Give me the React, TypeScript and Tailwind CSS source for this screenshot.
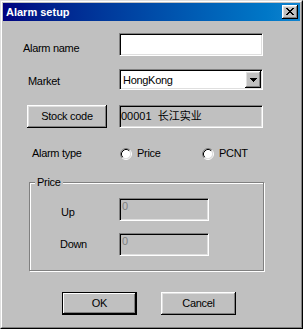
import React from "react";

const font = { fontFamily: '"Liberation Sans", Arial, "Noto Sans CJK SC", sans-serif' };

const sunken =
  "border border-t-[#808080] border-l-[#808080] border-b-white border-r-white shadow-[inset_1px_1px_0_#000,inset_-1px_-1px_0_#dfdfdf]";
const raised =
  "shadow-[inset_-1px_-1px_0_#000,inset_1px_1px_0_#fff,inset_-2px_-2px_0_#808080,inset_2px_2px_0_#dfdfdf]";

function Radio({ label }: { label: string }) {
  return (
    <div className="flex items-center">
      <svg width="12" height="12" viewBox="0 0 12 12">
        <circle cx="6" cy="6" r="4.5" fill="#fff" />
        <path d="M2.11 9.89 A5.5 5.5 0 0 1 9.89 2.11" stroke="#808080" strokeWidth="1" fill="none" />
        <path d="M9.89 2.11 A5.5 5.5 0 0 1 2.11 9.89" stroke="#fff" strokeWidth="1" fill="none" />
        <path d="M2.82 9.18 A4.5 4.5 0 0 1 9.18 2.82" stroke="#000" strokeWidth="1" fill="none" />
        <path d="M9.18 2.82 A4.5 4.5 0 0 1 2.82 9.18" stroke="#dfdfdf" strokeWidth="1" fill="none" />
      </svg>
      <span className="ml-[5px] leading-[13px]">{label}</span>
    </div>
  );
}

export default function App() {
  return (
    <div
      style={font}
      className="w-[303px] h-[329px] text-[11px] tracking-[-0.3px] text-black border border-t-[#dfdfdf] border-l-[#dfdfdf] border-b-black border-r-black"
    >
      <div className="w-full h-full border border-t-white border-l-white border-b-[#808080] border-r-[#808080] bg-[#c0c0c0] p-px">
        {/* title bar */}
        <div className="h-[18px] flex items-center justify-between bg-gradient-to-r from-[#000080] to-[#1084d0]">
          <span className="pl-[3px] text-white font-bold tracking-normal">Alarm setup</span>
          <div className={`mr-[2px] w-[16px] h-[14px] bg-[#c0c0c0] flex pl-[4px] pt-[3px] ${raised}`}>
            <svg width="8" height="7" viewBox="0 0 8 7" shapeRendering="crispEdges">
              <g fill="#000">
                <rect x="0" y="0" width="2" height="1" />
                <rect x="6" y="0" width="2" height="1" />
                <rect x="1" y="1" width="2" height="1" />
                <rect x="5" y="1" width="2" height="1" />
                <rect x="2" y="2" width="4" height="1" />
                <rect x="3" y="3" width="2" height="1" />
                <rect x="2" y="4" width="4" height="1" />
                <rect x="1" y="5" width="2" height="1" />
                <rect x="5" y="5" width="2" height="1" />
                <rect x="0" y="6" width="2" height="1" />
                <rect x="6" y="6" width="2" height="1" />
              </g>
            </svg>
          </div>
        </div>

        {/* Alarm name */}
        <div className="mt-[12px] flex items-start">
          <div className="w-[116px] pl-[20px] mt-[9px] leading-[13px]">Alarm name</div>
          <div className={`w-[144px] h-[23px] bg-white ${sunken}`} />
        </div>

        {/* Market */}
        <div className="mt-[13px] flex items-start">
          <div className="w-[116px] pl-[25px] mt-[6px] leading-[13px]">Market</div>
          <div className={`w-[144px] h-[21px] bg-white flex items-center justify-between ${sunken}`}>
            <span className="pl-[3px] pt-[1px] leading-[13px]">HongKong</span>
            <div className={`mr-px w-[16px] h-[17px] bg-[#c0c0c0] flex items-center justify-center ${raised}`}>
              <svg width="7" height="4" viewBox="0 0 7 4" shapeRendering="crispEdges">
                <g fill="#000">
                  <rect x="0" y="0" width="7" height="1" />
                  <rect x="1" y="1" width="5" height="1" />
                  <rect x="2" y="2" width="3" height="1" />
                  <rect x="3" y="3" width="1" height="1" />
                </g>
              </svg>
            </div>
          </div>
        </div>

        {/* Stock code */}
        <div className="mt-[15px] flex items-start">
          <div className={`ml-[24px] w-[80px] h-[23px] bg-[#c0c0c0] flex items-center justify-center leading-[13px] ${raised}`}>
            Stock code
          </div>
          <div className={`ml-[12px] w-[144px] h-[23px] bg-[#c0c0c0] flex items-center pl-[1px] leading-[13px] tracking-normal ${sunken}`}>
            <span>00001&nbsp;&nbsp;长江实业</span>
          </div>
        </div>

        {/* Alarm type */}
        <div className="mt-[19px] flex items-center h-[13px]">
          <div className="w-[116px] pl-[29px] leading-[13px]">Alarm type</div>
          <div className="ml-[1px] w-[82px]">
            <Radio label="Price" />
          </div>
          <Radio label="PCNT" />
        </div>

        {/* Price group */}
        <div className="relative mt-[22px] ml-[26px] w-[235px] h-[89px] border border-[#808080] shadow-[inset_1px_1px_0_#fff,1px_1px_0_#fff]">
          <span className="absolute left-[5px] -top-[7px] px-[2px] bg-[#c0c0c0] leading-[13px]">Price</span>
          <div className="pt-[15px] flex items-start">
            <div className="w-[89px] pl-[31px] mt-[8px] leading-[13px]">Up</div>
            <div className={`w-[90px] h-[23px] bg-[#c0c0c0] pl-[2px] pt-px leading-[13px] text-[#808080] ${sunken}`}>0</div>
          </div>
          <div className="mt-[12px] flex items-start">
            <div className="w-[89px] pl-[30px] mt-[5px] leading-[13px]">Down</div>
            <div className={`w-[90px] h-[23px] bg-[#c0c0c0] pl-[2px] pt-px leading-[13px] text-[#808080] ${sunken}`}>0</div>
          </div>
        </div>

        {/* Buttons */}
        <div className="mt-[21px] flex">
          <div className={`ml-[59px] w-[75px] h-[23px] bg-[#c0c0c0] border border-black flex items-center justify-center leading-[13px] shadow-[inset_-1px_-1px_0_#000,inset_1px_1px_0_#fff,inset_-2px_-2px_0_#808080]`}>
            OK
          </div>
          <div className={`ml-[24px] w-[75px] h-[23px] bg-[#c0c0c0] flex items-center justify-center leading-[13px] ${raised}`}>
            Cancel
          </div>
        </div>
      </div>
    </div>
  );
}
